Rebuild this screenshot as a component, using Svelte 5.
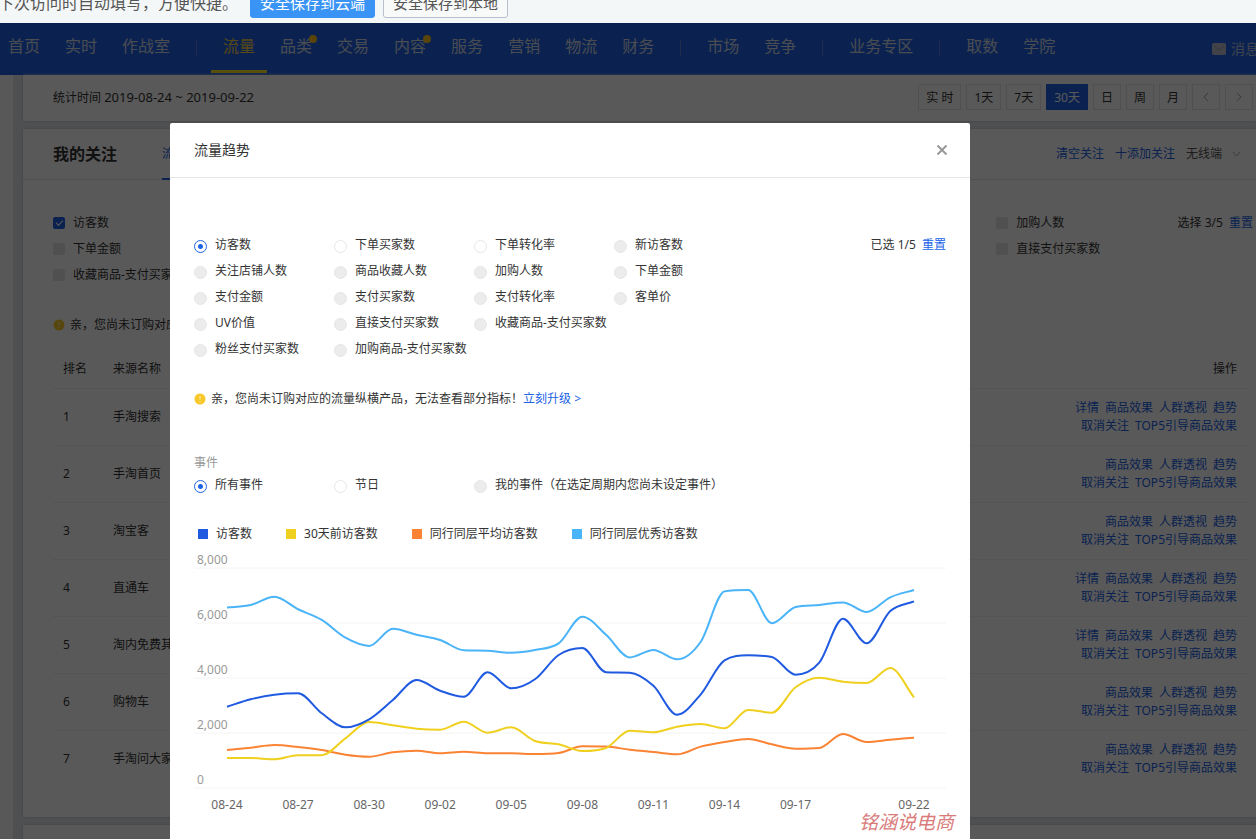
<script lang="ts">
  interface NavItem {
    name: string;
    dot?: boolean;
  }

  const navGroups: NavItem[][] = [
    [{ name: '首页' }, { name: '实时' }, { name: '作战室' }],
    [
      { name: '流量' },
      { name: '品类', dot: true },
      { name: '交易' },
      { name: '内容', dot: true },
      { name: '服务' },
      { name: '营销' },
      { name: '物流' },
      { name: '财务' }
    ],
    [{ name: '市场' }, { name: '竞争' }],
    [{ name: '业务专区' }],
    [{ name: '取数' }, { name: '学院' }]
  ];
  let activeNav = $state('流量');

  const periods = ['实 时', '1天', '7天', '30天', '日', '周', '月'];
  let period = $state('30天');

  const followMetrics = [
    '访客数', '下单买家数', '下单转化率', '新访客数', '关注店铺人数', '商品收藏人数', '加购人数',
    '下单金额', '支付金额', '支付买家数', '支付转化率', '客单价', 'UV价值', '直接支付买家数',
    '收藏商品-支付买家数', '粉丝支付买家数', '加购商品-支付买家数'
  ];
  const checkedMetrics = ['访客数', '支付买家数', '支付转化率'];

  const sources = [
    { name: '手淘搜索', detail: true },
    { name: '手淘首页', detail: false },
    { name: '淘宝客', detail: false },
    { name: '直通车', detail: true },
    { name: '淘内免费其他', detail: true },
    { name: '购物车', detail: false },
    { name: '手淘问大家', detail: false }
  ];

  const trendMetrics = [
    '访客数', '下单买家数', '下单转化率', '新访客数',
    '关注店铺人数', '商品收藏人数', '加购人数', '下单金额',
    '支付金额', '支付买家数', '支付转化率', '客单价',
    'UV价值', '直接支付买家数', '收藏商品-支付买家数',
    '粉丝支付买家数', '加购商品-支付买家数'
  ];
  // 未订购流量纵横时只开放这三个指标
  const openMetrics = ['访客数', '下单买家数', '下单转化率'];
  let metric = $state('访客数');

  const eventTypes = [
    { name: '所有事件', disabled: false },
    { name: '节日', disabled: false },
    { name: '我的事件（在选定周期内您尚未设定事件）', disabled: true }
  ];
  let eventType = $state('所有事件');

  const series = [
    {
      name: '访客数',
      color: '#1f5ae0',
      values: [2956, 3225, 3392, 3443, 2716, 2207, 2498, 3200, 3927, 3538, 3320, 4207, 3625, 3953, 4836, 5091, 4207, 4193, 3720, 2665, 3407, 4643, 4825, 4764, 4120, 4556, 6156, 5262, 6436, 6789]
    },
    {
      name: '30天前访客数',
      color: '#f0d01e',
      values: [1091, 1091, 1044, 1189, 1189, 1807, 2400, 2280, 2156, 2120, 2411, 2011, 2207, 1709, 1589, 1345, 1455, 2084, 2025, 2229, 2327, 2171, 2836, 2738, 3662, 4011, 3865, 3818, 4364, 3298]
    },
    {
      name: '同行同层平均访客数',
      color: '#fa8334',
      values: [1382, 1465, 1564, 1491, 1382, 1211, 1138, 1298, 1356, 1262, 1320, 1262, 1262, 1236, 1273, 1516, 1505, 1393, 1309, 1225, 1505, 1673, 1782, 1589, 1429, 1455, 1964, 1673, 1756, 1829]
    },
    {
      name: '同行同层优秀访客数',
      color: '#4ab4f8',
      values: [6560, 6655, 6955, 6500, 6110, 5465, 5165, 5790, 5575, 5380, 5005, 4990, 4920, 5020, 5260, 6230, 5575, 4750, 5020, 4680, 5320, 7150, 7200, 5990, 6580, 6655, 6750, 6400, 6935, 7200]
    }
  ];

  const yTicks = [8000, 6000, 4000, 2000, 0];
  const xTicks = [
    { day: 0, label: '08-24' },
    { day: 3, label: '08-27' },
    { day: 6, label: '08-30' },
    { day: 9, label: '09-02' },
    { day: 12, label: '09-05' },
    { day: 15, label: '09-08' },
    { day: 18, label: '09-11' },
    { day: 21, label: '09-14' },
    { day: 24, label: '09-17' },
    { day: 29, label: '09-22' }
  ];

  const xOf = (i: number) => 33 + (i * 687) / 29;
  const yOf = (v: number) => 240 - (v * 220) / 8000;

  // 单调三次曲线，峰值处不会超出数据点
  function linePath(values: number[]) {
    const step = xOf(1) - xOf(0);
    const ys = values.map(yOf);
    const slope = ys.map((y, i) => {
      if (i === 0) return (ys[1] - y) / step;
      if (i === ys.length - 1) return (y - ys[i - 1]) / step;
      const a = (y - ys[i - 1]) / step;
      const b = (ys[i + 1] - y) / step;
      if (a * b <= 0) return 0;
      const m = (a + b) / 2;
      return Math.sign(m) * Math.min(Math.abs(m), 3 * Math.abs(a), 3 * Math.abs(b));
    });
    let d = `M${xOf(0)},${ys[0]}`;
    for (let i = 1; i < ys.length; i++) {
      const c = step / 3;
      d += `C${xOf(i - 1) + c},${ys[i - 1] + slope[i - 1] * c} ${xOf(i) - c},${ys[i] - slope[i] * c} ${xOf(i)},${ys[i]}`;
    }
    return d;
  }
</script>

{#snippet warnIcon()}
  <svg class="warn-icon" viewBox="0 0 12 12" aria-hidden="true">
    <circle cx="6" cy="6" r="5.5" fill="#f8c828" />
    <path d="M6 3v3.6M6 8v1" stroke="#fff3c0" stroke-width="1" />
  </svg>
{/snippet}

<div class="app">
  <div class="save-bar">
    <span class="save-text">下次访问时自动填写，方便快捷。</span>
    <button class="save-button primary">安全保存到云端</button>
    <button class="save-button">安全保存到本地</button>
  </div>

  <div class="stage">
    <nav class="nav">
      {#each navGroups as group, g}
        {#if g > 0}<span class="nav-divider"></span>{/if}
        <div class="nav-group">
          {#each group as item}
            <a href="#nav" class="nav-item" class:active={item.name === activeNav} onclick={() => (activeNav = item.name)}>
              {item.name}{#if item.dot}<i class="nav-dot"></i>{/if}
            </a>
          {/each}
        </div>
      {/each}
      <a href="#message" class="message">
        <svg width="14" height="12" viewBox="0 0 14 12" aria-hidden="true">
          <rect width="14" height="12" rx="2" fill="#b9c0cf" />
          <path d="M2 3l5 4 5-4" fill="none" stroke="#98a4bb" />
        </svg>
        消息
      </a>
    </nav>

    <div class="page">
      <aside class="side"></aside>
      <main class="main">
        <section class="card date-bar">
          <div class="date-text">统计时间 <span class="dates">2019-08-24 ~ 2019-09-22</span></div>
          <div class="periods">
            {#each periods as p}
              <button class="period" class:active={p === period} onclick={() => (period = p)}>{p}</button>
            {/each}
            <button class="period arrow" aria-label="上一个">
              <svg width="6" height="10" viewBox="0 0 6 10"><path d="M5 1L1 5l4 4" /></svg>
            </button>
            <button class="period arrow" aria-label="下一个">
              <svg width="6" height="10" viewBox="0 0 6 10"><path d="M1 1l4 4-4 4" /></svg>
            </button>
          </div>
        </section>

        <section class="card follow">
          <header class="follow-header">
            <h2 class="follow-title">我的关注</h2>
            <a href="#tab" class="tab">流量来源</a>
            <div class="follow-tools">
              <a href="#clear">清空关注</a>
              <a href="#add">十添加关注</a>
              <span class="terminal">
                无线端
                <svg width="9" height="6" viewBox="0 0 9 6"><path d="M1 1l3.5 4L8 1" fill="none" stroke="#aaa" /></svg>
              </span>
            </div>
          </header>

          <div class="follow-body">
            <div class="checks">
              <div class="check-grid">
                {#each followMetrics as name}
                  <label class="check">
                    <input type="checkbox" checked={checkedMetrics.includes(name)} disabled={!checkedMetrics.includes(name)} />
                    {name}
                  </label>
                {/each}
              </div>
              <div class="picked">选择 3/5 <a href="#reset">重置</a></div>
            </div>

            <div class="notice">
              {@render warnIcon()}
              <span>亲，您尚未订购对应的流量纵横产品，无法查看部分指标！<a href="#upgrade">立刻升级 &gt;</a></span>
            </div>

            <table class="sources">
              <thead>
                <tr>
                  <th class="rank">排名</th>
                  <th>来源名称</th>
                  <th class="ops">操作</th>
                </tr>
              </thead>
              <tbody>
                {#each sources as source, i}
                  <tr>
                    <td class="rank">{i + 1}</td>
                    <td>{source.name}</td>
                    <td class="ops">
                      <div class="links">
                        {#if source.detail}<a href="#detail">详情</a>{/if}
                        <a href="#goods">商品效果</a>
                        <a href="#crowd">人群透视</a>
                        <a href="#trend">趋势</a>
                      </div>
                      <div class="links">
                        <a href="#unfollow">取消关注</a>
                        <a href="#top">TOP5引导商品效果</a>
                      </div>
                    </td>
                  </tr>
                {/each}
              </tbody>
            </table>
          </div>
        </section>

        <section class="card next-card"></section>
      </main>
    </div>

    <div class="overlay">
      <div class="modal" role="dialog" aria-label="流量趋势">
        <header class="modal-header">
          <h3 class="modal-title">流量趋势</h3>
          <button class="close" aria-label="关闭">
            <svg width="10" height="10" viewBox="0 0 10 10"><path d="M0.5 0.5l9 9M9.5 0.5l-9 9" /></svg>
          </button>
        </header>

        <div class="modal-body">
          <div class="metrics">
            <div class="radio-list">
              {#each trendMetrics as name}
                <label class="radio">
                  <input type="radio" name="metric" value={name} bind:group={metric} disabled={!openMetrics.includes(name)} />
                  {name}
                </label>
              {/each}
            </div>
            <div class="picked">已选 1/5 <a href="#reset">重置</a></div>
          </div>

          <div class="notice">
            {@render warnIcon()}
            <span>亲，您尚未订购对应的流量纵横产品，无法查看部分指标！<a href="#upgrade">立刻升级 &gt;</a></span>
          </div>

          <div class="event-label">事件</div>
          <div class="events">
            {#each eventTypes as type}
              <label class="radio">
                <input type="radio" name="event" value={type.name} bind:group={eventType} disabled={type.disabled} />
                {type.name}
              </label>
            {/each}
          </div>

          <div class="legend">
            {#each series as line}
              <span class="legend-item"><i class="swatch" style="background: {line.color}"></i>{line.name}</span>
            {/each}
          </div>

          <div class="chart">
            <svg viewBox="0 0 752 270">
              {#each yTicks as tick}
                <line x1="0" x2="752" y1={yOf(tick)} y2={yOf(tick)} class="grid-line" />
                <text x="3" y={yOf(tick) - 4} class="y-label">{tick.toLocaleString('en-US')}</text>
              {/each}
              {#each [...series].reverse() as line}
                <path d={linePath(line.values)} fill="none" stroke={line.color} stroke-width="2" />
              {/each}
              {#each xTicks as tick}
                <text x={xOf(tick.day)} y="261" class="x-label">{tick.label}</text>
              {/each}
            </svg>
            <span class="signature">铭涵说电商</span>
          </div>
        </div>
      </div>
    </div>
  </div>
</div>

<style>
  :global(body) {
    margin: 0;
    font-family: 'Noto Sans', 'Noto Sans CJK SC', sans-serif;
    font-size: 12px;
    line-height: 18px;
    color: #333;
    background: #fff;
  }

  a {
    color: #2062e6;
    text-decoration: none;
  }

  button {
    font-family: inherit;
    cursor: pointer;
  }

  .app {
    height: 100vh;
    display: flex;
    flex-direction: column;
    overflow: hidden;
    white-space: nowrap;
  }

  /* Save bar */
  .save-bar {
    height: 23px;
    flex-shrink: 0;
    box-sizing: border-box;
    padding-bottom: 5px;
    display: flex;
    align-items: flex-end;
    gap: 8px;
    overflow: hidden;
    background: #f4f7f7;
  }

  .save-text {
    margin-left: -2px;
    margin-right: 4px;
    font-size: 16px;
    line-height: 30px;
    color: #555;
  }

  .save-button {
    height: 30px;
    width: 125px;
    padding: 0;
    border: 1px solid #b9c0cc;
    border-radius: 3px;
    background: #f8fafa;
    font-size: 15px;
    line-height: 28px;
    color: #555;
  }

  .save-button.primary {
    background: #3a94f5;
    border-color: #3a94f5;
    color: #fff;
  }

  .stage {
    flex: 1;
    min-height: 0;
    position: relative;
    overflow: hidden;
    background: #e2e6ea;
  }

  /* Nav */
  .nav {
    height: 52px;
    display: flex;
    align-items: flex-start;
    background: #2062e6;
  }

  .nav-group {
    display: flex;
    gap: 1px;
  }

  .nav-group:first-child {
    margin-left: -4px;
  }

  .nav-item {
    position: relative;
    padding: 0 12px;
    border-bottom: 3px solid transparent;
    font-size: 16px;
    line-height: 47px;
    color: #d2d9e8;
  }

  .nav-item.active {
    color: #f8d040;
    border-color: #ffe620;
  }

  .nav-dot {
    position: absolute;
    top: 12px;
    right: 7px;
    width: 8px;
    height: 8px;
    border-radius: 50%;
    background: #ffc61a;
  }

  .nav-divider {
    width: 1px;
    height: 16px;
    margin: 17px 14px;
    background: #5580d8;
  }

  .message {
    display: flex;
    align-items: center;
    gap: 5px;
    margin-left: auto;
    margin-right: -3px;
    font-size: 14px;
    line-height: 52px;
    color: #b8c4de;
  }

  .page {
    display: flex;
    gap: 10px;
  }

  .side {
    width: 13px;
    background: #fbfbfb;
  }

  .main {
    flex: 1;
    display: flex;
    flex-direction: column;
    gap: 8px;
  }

  .card {
    background: #fff;
    box-shadow: 0 0 3px #b0b6be;
  }

  .date-bar {
    display: flex;
    justify-content: space-between;
    align-items: center;
    height: 46px;
    box-sizing: border-box;
    padding: 0 3px 2px 30px;
  }

  .dates {
    font-size: 13px;
  }

  .periods {
    display: flex;
    gap: 5px;
  }

  .period {
    height: 26px;
    min-width: 28px;
    padding: 0 7px;
    border: 1px solid #e4e4e4;
    background: none;
    font-size: 12px;
    color: #333;
  }

  .period.active {
    background: #2062e6;
    border-color: #2062e6;
    color: #fff;
  }

  .arrow path {
    fill: none;
    stroke: #aaa;
  }

  /* Follow card */
  .follow {
    height: 688px;
  }

  .follow-header {
    display: flex;
    align-items: stretch;
    height: 50px;
    padding: 0 15px 0 30px;
    border-bottom: 1px solid #e6e6e6;
    line-height: 50px;
  }

  .follow-title {
    margin: 0 45px 0 0;
    font-size: 16px;
    font-weight: 700;
    line-height: 50px;
  }

  .tab {
    box-sizing: border-box;
    height: 51px;
    border-bottom: 2px solid #2062e6;
  }

  .follow-tools {
    display: flex;
    gap: 11px;
    margin-left: auto;
  }

  .terminal {
    display: flex;
    align-items: center;
    gap: 10px;
    color: #555;
  }

  .follow-body {
    padding: 30px 3px 0 30px;
  }

  .checks {
    display: flex;
    gap: 24px;
  }

  .check-grid {
    flex: 1;
    display: grid;
    grid-template-columns: repeat(7, minmax(0, 1fr));
  }

  .check {
    display: flex;
    align-items: center;
    gap: 8px;
    height: 26px;
  }

  .check input {
    appearance: none;
    flex-shrink: 0;
    width: 12px;
    height: 12px;
    margin: 0;
    border-radius: 2px;
    background: #e6e6e6;
  }

  .check input:checked {
    background: #2062e6;
  }

  .check input:checked::after {
    content: '';
    display: block;
    width: 6px;
    height: 3px;
    margin: 3px auto;
    border: solid #fff;
    border-width: 0 0 1px 1px;
    transform: rotate(-45deg);
  }

  .picked {
    line-height: 26px;
  }

  .picked a {
    margin-left: 3px;
  }

  .notice {
    display: flex;
    align-items: center;
    gap: 5px;
    margin-top: 28px;
  }

  .warn-icon {
    width: 12px;
    height: 12px;
  }

  .sources {
    width: calc(100% - 6px);
    margin-top: 16px;
    border-collapse: collapse;
  }

  .sources th {
    height: 38px;
    padding: 0;
    font-weight: 400;
    text-align: left;
    border-bottom: 1px solid #f0f0f0;
  }

  .sources td {
    height: 56px;
    padding: 0;
    border-bottom: 1px solid #f0f0f0;
  }

  .sources tbody tr:last-child td {
    border-bottom: none;
  }

  .sources .rank {
    width: 50px;
    padding-left: 10px;
  }

  .sources .ops {
    padding-right: 10px;
    text-align: right;
  }

  .links {
    display: flex;
    justify-content: flex-end;
    gap: 6px;
  }

  .next-card {
    height: 200px;
  }

  /* Modal */
  .overlay {
    position: absolute;
    inset: 0;
    display: flex;
    padding: 100px 0 0 170px;
    background: rgba(0, 0, 0, 0.65);
  }

  .modal {
    width: 800px;
    min-height: 800px;
    border-radius: 2px;
    background: #fff;
  }

  .modal-header {
    display: flex;
    justify-content: space-between;
    align-items: center;
    height: 54px;
    box-sizing: content-box;
    padding: 0 23px 0 24px;
    border-bottom: 1px solid #e6e6e6;
  }

  .modal-title {
    margin: 0;
    font-size: 14px;
    font-weight: 400;
    line-height: 20px;
  }

  .close {
    display: flex;
    padding: 0;
    border: none;
    background: none;
  }

  .close path {
    stroke: #999;
    stroke-width: 2;
  }

  .modal-body {
    padding: 54px 24px 0;
  }

  .metrics {
    display: flex;
    justify-content: space-between;
  }

  .radio-list {
    display: flex;
    flex-wrap: wrap;
    width: 560px;
  }

  .radio {
    display: flex;
    align-items: center;
    gap: 8px;
    box-sizing: border-box;
    min-width: 140px;
    height: 26px;
    padding-right: 12px;
  }

  .radio input {
    appearance: none;
    width: 13px;
    height: 13px;
    margin: 2px 0 0;
    box-sizing: border-box;
    border: 1px solid #e6e6e6;
    border-radius: 50%;
    background: #fff;
  }

  .radio input:disabled {
    background: #ececec;
  }

  .radio input:checked {
    border-color: #2062e6;
    background: radial-gradient(circle, #2062e6 2px, #fff 3px);
  }

  .event-label {
    margin-top: 46px;
    color: #999;
  }

  .events {
    display: flex;
  }

  .legend {
    display: flex;
    gap: 34px;
    margin-top: 27px;
    padding-left: 4px;
  }

  .legend-item {
    display: flex;
    align-items: center;
    gap: 8px;
  }

  .swatch {
    width: 10px;
    height: 10px;
  }

  .chart {
    position: relative;
    margin-top: 5px;
  }

  .chart svg {
    display: block;
    width: 100%;
  }

  .grid-line {
    stroke: #f4f4f4;
  }

  .y-label {
    font-size: 12px;
    fill: #999;
  }

  .x-label {
    font-size: 12px;
    fill: #666;
    text-anchor: middle;
  }

  .signature {
    position: absolute;
    top: 262px;
    right: -8px;
    font-size: 19px;
    line-height: 24px;
    font-style: italic;
    color: #d97b7b;
  }
</style>
